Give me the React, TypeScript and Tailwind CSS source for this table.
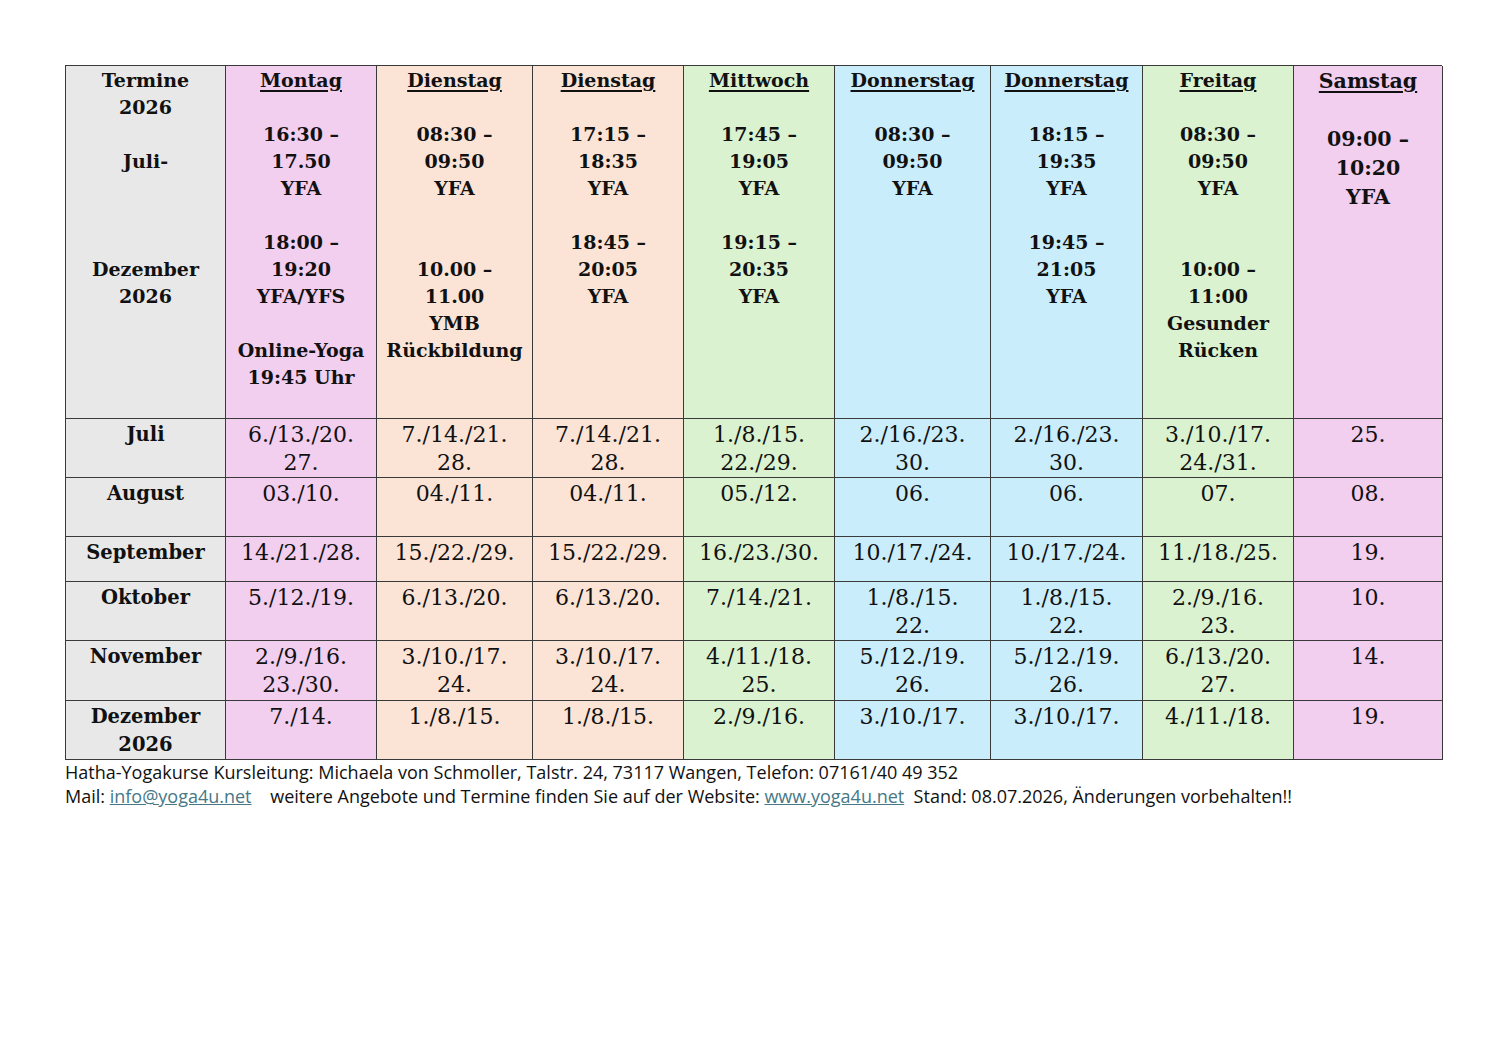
import React from "react";

const COLS = [
  "bg-[#e8e8e8]",
  "bg-[#f2ceef]",
  "bg-[#fbe3d6]",
  "bg-[#fbe3d6]",
  "bg-[#daf2d0]",
  "bg-[#caedfb]",
  "bg-[#caedfb]",
  "bg-[#daf2d0]",
  "bg-[#f2ceef]",
];

const header: string[][] = [
  ["Termine", "2026", "", "Juli-", "", "", "", "Dezember", "2026"],
  ["@Montag", "", "16:30 –", "17.50", "YFA", "", "18:00 –", "19:20", "YFA/YFS", "", "Online-Yoga", "19:45 Uhr"],
  ["@Dienstag", "", "08:30 –", "09:50", "YFA", "", "", "10.00 –", "11.00", "YMB", "Rückbildung"],
  ["@Dienstag", "", "17:15 –", "18:35", "YFA", "", "18:45 –", "20:05", "YFA"],
  ["@Mittwoch", "", "17:45 –", "19:05", "YFA", "", "19:15 –", "20:35", "YFA"],
  ["@Donnerstag", "", "08:30 –", "09:50", "YFA"],
  ["@Donnerstag", "", "18:15 –", "19:35", "YFA", "", "19:45 –", "21:05", "YFA"],
  ["@Freitag", "", "08:30 –", "09:50", "YFA", "", "", "10:00 –", "11:00", "Gesunder", "Rücken"],
  ["@Samstag", "", "09:00 –", "10:20", "YFA"],
];

type Row = { h: string; cells: string[][] };

const rows: Row[] = [
  {
    h: "h-[59px]",
    cells: [
      ["Juli"],
      ["6./13./20.", "27."],
      ["7./14./21.", "28."],
      ["7./14./21.", "28."],
      ["1./8./15.", "22./29."],
      ["2./16./23.", "30."],
      ["2./16./23.", "30."],
      ["3./10./17.", "24./31."],
      ["25."],
    ],
  },
  {
    h: "h-[59px]",
    cells: [["August"], ["03./10."], ["04./11."], ["04./11."], ["05./12."], ["06."], ["06."], ["07."], ["08."]],
  },
  {
    h: "h-[45px]",
    cells: [
      ["September"],
      ["14./21./28."],
      ["15./22./29."],
      ["15./22./29."],
      ["16./23./30."],
      ["10./17./24."],
      ["10./17./24."],
      ["11./18./25."],
      ["19."],
    ],
  },
  {
    h: "h-[59px]",
    cells: [
      ["Oktober"],
      ["5./12./19."],
      ["6./13./20."],
      ["6./13./20."],
      ["7./14./21."],
      ["1./8./15.", "22."],
      ["1./8./15.", "22."],
      ["2./9./16.", "23."],
      ["10."],
    ],
  },
  {
    h: "h-[60px]",
    cells: [
      ["November"],
      ["2./9./16.", "23./30."],
      ["3./10./17.", "24."],
      ["3./10./17.", "24."],
      ["4./11./18.", "25."],
      ["5./12./19.", "26."],
      ["5./12./19.", "26."],
      ["6./13./20.", "27."],
      ["14."],
    ],
  },
  {
    h: "h-[59px]",
    cells: [
      ["Dezember", "2026"],
      ["7./14."],
      ["1./8./15."],
      ["1./8./15."],
      ["2./9./16."],
      ["3./10./17."],
      ["3./10./17."],
      ["4./11./18."],
      ["19."],
    ],
  },
];

const serif = { fontFamily: '"DejaVu Serif", "Liberation Serif", serif' };

function HeaderCell({ lines, col }: { lines: string[]; col: number }) {
  const big = col === 8;
  return (
    <div
      className={`${COLS[col]} border-r border-b border-[#3a3a3a] h-[353px] pt-[1px] text-center font-bold text-[#111] ${
        big ? "text-[20.5px] leading-[29px]" : "text-[19px] leading-[27px]"
      }`}
    >
      {lines.map((l, i) => {
        if (l === "") return <div key={i} className={big ? "h-[29px]" : "h-[27px]"} />;
        if (l.startsWith("@"))
          return (
            <div key={i}>
              <span className="underline decoration-[1.5px] underline-offset-[3px]">{l.slice(1)}</span>
            </div>
          );
        return (
          <div key={i} className="whitespace-nowrap">
            {l}
          </div>
        );
      })}
    </div>
  );
}

export default function App() {
  return (
    <div className="min-h-[1058px] w-[1497px] bg-white" style={serif}>
      <div className="pt-[65px] pl-[65px]">
        <div className="grid grid-cols-[160px_151px_156px_151px_151px_156px_152px_151px_149px] w-[1377px] border-l border-t border-[#3a3a3a]">
          {header.map((lines, i) => (
            <HeaderCell key={i} lines={lines} col={i} />
          ))}
          {rows.map((r, ri) =>
            r.cells.map((c, ci) => (
              <div
                key={`${ri}-${ci}`}
                className={`${COLS[ci]} ${r.h} border-r border-b border-[#3a3a3a] pt-[2px] text-center text-[#111] leading-[28px] ${
                  ci === 0 ? "font-bold text-[19.5px]" : "text-[22px]"
                }`}
              >
                {c.map((l, li) => (
                  <div key={li} className="whitespace-nowrap">
                    {l}
                  </div>
                ))}
              </div>
            ))
          )}
        </div>
        <div
          className="pt-[0px] text-[18px] leading-[24px] text-[#111]"
          style={{ fontFamily: '"Open Sans", "Liberation Sans", Arial, sans-serif' }}
        >
          <div>Hatha-Yogakurse Kursleitung: Michaela von Schmoller, Talstr. 24, 73117 Wangen, Telefon: 07161/40 49 352</div>
          <div className="whitespace-pre">
            Mail: <span className="text-[#467886] underline">info@yoga4u.net</span>
            {"    weitere Angebote und Termine finden Sie auf der Website: "}
            <span className="text-[#467886] underline">www.yoga4u.net</span>
            {"  Stand: 08.07.2026, Änderungen vorbehalten!!"}
          </div>
        </div>
      </div>
    </div>
  );
}
